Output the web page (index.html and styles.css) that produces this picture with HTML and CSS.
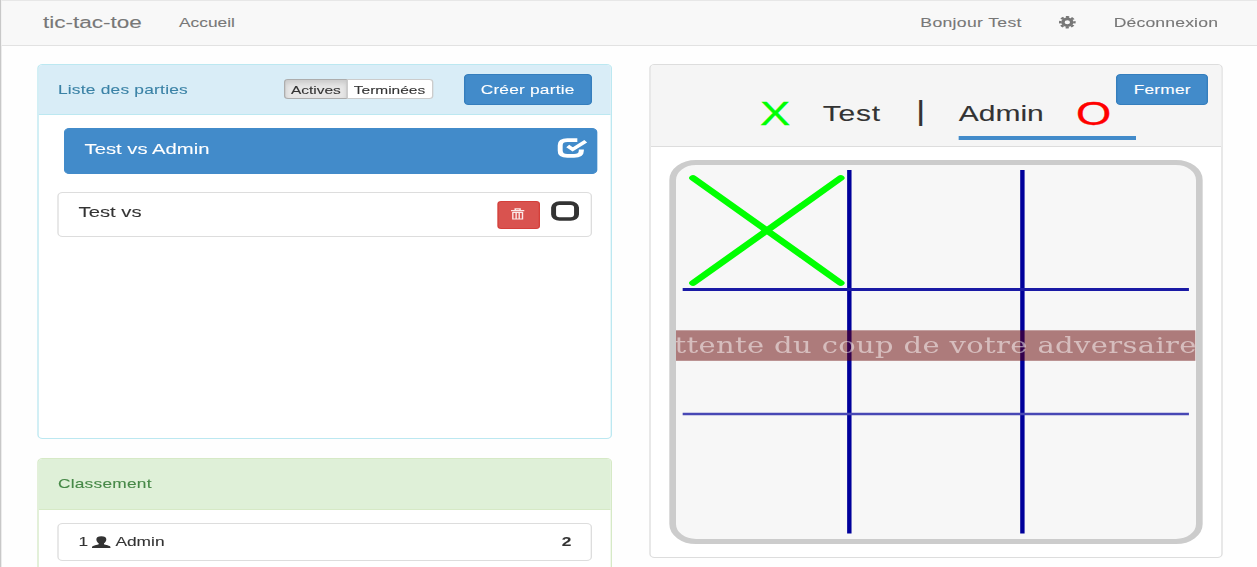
FILE: index.html
```html
<!DOCTYPE html>
<html lang="fr">
<head>
<meta charset="utf-8">
<title>tic-tac-toe</title>
<link rel="stylesheet" href="styles.css">
</head>
<body>
<div class="page">
  <nav class="navbar">
    <a class="brand">tic-tac-toe</a>
    <a class="nav-home">Accueil</a>
    <span class="nav-user">Bonjour Test</span>
    <svg class="nav-cog" viewBox="0 0 12 12"><circle cx="6" cy="6" r="3.2" fill="none" stroke="#777" stroke-width="2.5"/><circle cx="6" cy="6" r="5.1" fill="none" stroke="#777" stroke-width="1.800" stroke-dasharray="2.300 1.705" stroke-dashoffset="1.150"/></svg>
    <a class="nav-logout">Déconnexion</a>
  </nav>
  <main class="columns">
    <div class="left">
      <section class="panel games">
        <header class="panel-head info">
          <h2 class="title">Liste des parties</h2>
          <div class="toggle"><button class="seg active">Actives</button><button class="seg">Terminées</button></div>
          <button class="btn create">Créer partie</button>
        </header>
        <div class="game selected">
          <span class="game-name">Test vs Admin</span>
          <svg class="check" viewBox="0 0 23 20" fill="none" stroke="#fff" stroke-width="3.800"><path d="M15 2.100H7.500Q2.100 2.100 2.100 7.500V12.500Q2.100 17.900 7.500 17.900H12.500Q18 17.900 18 12.800V11.500"/><path d="M7.800 8L11.500 11.400L21.300 3.200" stroke-width="3.300"/></svg>
        </div>
        <div class="game">
          <span class="game-name">Test vs</span>
          <button class="trash"><svg viewBox="0 0 11 12" fill="none" stroke="#fbe9e8"><path d="M.3 2.500H10.700M3.600 2V.6H7.400V2" stroke-width="1.200"/><path d="M1.700 4V11.200H9.300V4M1.700 4.300H9.300M4.300 4V11M6.700 4V11" stroke-width="1.100"/></svg></button>
          <svg class="uncheck" viewBox="0 0 22 20"><rect x="2.200" y="2.200" width="17.200" height="15.800" rx="4.400" fill="none" stroke="#333" stroke-width="3.700"/></svg>
        </div>
      </section>
      <section class="panel ranking">
        <header class="panel-head success"><h2 class="title">Classement</h2></header>
        <div class="rank">
          <span>1</span>
          <svg class="user" viewBox="0 0 14 12"><path d="M7 0C9.700 0 10.900 1.400 10.700 3.400C10.600 5 9.800 6.200 9 7V8C9.700 8.900 13.800 9 14 11V12H0V11C.2 9 4.300 8.900 5 8V7C4.200 6.200 3.400 5 3.300 3.400C3.100 1.400 4.300 0 7 0Z" fill="#333"/></svg>
          <span class="player">Admin</span>
          <b class="score">2</b>
        </div>
      </section>
    </div>
    <section class="panel match">
      <header class="match-head">
        <span class="mark cross">X</span>
        <span class="name first">Test</span>
        <span class="bar">|</span>
        <span class="turn"><span class="name">Admin</span><span class="mark nought">O</span></span>
        <button class="btn close">Fermer</button>
      </header>
      <div class="board">
        <svg class="grid" viewBox="0 0 389.500 373">
          <g stroke="#00009b">
            <path d="M130 5V368.500M259.800 5V368.500" stroke-width="3.300"/>
            <path d="M5 124.500H384.700" stroke-width="2.900" stroke="#1a1aa5"/>
            <path d="M5 249H384.700" stroke-width="2.500" stroke="#4848b5"/>
          </g>
          <path d="M12.800 13L123.500 118M12.800 118L123.500 13" stroke="#0f0" stroke-width="5.800" stroke-linecap="round"/>
          <rect y="165.300" width="389.500" height="30.500" fill="#640000" fill-opacity=".5"/>
          <text class="status" x="-1.200" y="188" textLength="391.500" lengthAdjust="spacing">ttente du coup de votre adversaire</text>
        </svg>
      </div>
    </section>
  </main>
</div>
</body>
</html>
```
FILE: styles.css
```css
* { box-sizing: border-box; }
html, body { margin: 0; height: 567px; overflow: hidden; background: #fefefe; }
/* The interface is drawn with a wide horizontal aspect. */
.page {
  width: 942.75px;
  height: 567px;
  overflow: hidden;
  transform: scaleX(1.33333);
  transform-origin: 0 0;
  border-left: .75px solid #c8c8c8;
  font: 13px/18px "Liberation Sans", Arial, sans-serif;
  -webkit-text-stroke: .1px currentColor;
  color: #333;
}
button { font-family: inherit; padding: 0; -webkit-text-stroke: inherit; }
.navbar {
  display: flex;
  align-items: center;
  height: 46px;
  padding: 0 29px 1px 31.250px;
  background: #f8f8f8;
  border-top: 1px solid #e7e7e7;
  border-bottom: 1px solid #e2e2e2;
  color: #777;
}
.brand { width: 102px; font-size: 16.900px; }
.nav-home { flex: 1; }
.nav-user { width: 104px; font-size: 13.200px; letter-spacing: .25px; }
.nav-cog { width: 13px; height: 12.500px; margin-right: 28px; }
.nav-logout { width: 78.500px; font-size: 13.200px; letter-spacing: .12px; white-space: nowrap; }
.columns { display: flex; gap: 28.500px; padding: 18px 0 0 27.250px; }
.left { width: 430.500px; flex: none; }
.panel { border: 1px solid #ddd; border-radius: 4px; background: #fff; }
.games { height: 375px; border-color: #bce8f1; }
.panel-head { display: flex; align-items: center; padding: 0 14.200px; border-radius: 3px 3px 0 0; }
.info { height: 49.500px; background: #d9edf7; border-bottom: 1px solid #bce8f1; color: #3a82a6; }
.info .title { padding-top: 1px; }
.success { height: 51px; background: #dff0d8; border-bottom: 1px solid #d6e9c6; color: #468847; }
.title { margin: 0; font-size: 13px; font-weight: normal; letter-spacing: .17px; width: 170px; }
.toggle { display: flex; height: 20px; width: 112.500px; }
.seg {
  width: 65.500px;
  border: 1px solid #ccc;
  border-radius: 0 3px 3px 0;
  background: #fff;
  color: #333;
  font-size: 11.600px;
}
.seg:not(.active) { padding-right: 1px; }
.seg.active {
  width: 48px;
  margin-right: -1px;
  border-color: #adadad;
  border-radius: 3px 0 0 3px;
  background: #e6e6e6;
  box-shadow: inset 0 3px 5px rgba(0,0,0,.125);
}
.btn {
  height: 31px;
  border: 1px solid #357ebd;
  border-radius: 3.500px;
  background: #428bca;
  color: #fff;
  font-size: 13px;
  letter-spacing: .15px;
}
.create { width: 96px; margin-left: 22.500px; }
.game {
  display: flex;
  height: 45px;
  margin: 17.500px 14.200px 0;
  padding-left: 14.500px;
  border: 1px solid #ddd;
  border-radius: 4px;
  background: #fff;
}
.game.selected { height: 46px; margin: 13.500px 9.500px 0 18.700px; background: #428bca; border-color: #428bca; color: #fff; }
.game-name { flex: 1; margin-top: 10.500px; font-size: 15.200px; }
.check { width: 23px; height: 20px; margin: 8.500px 6.500px 0 0; }
.trash {
  width: 32px;
  height: 27.500px;
  margin: 8.500px 8px 0 0;
  border: 1px solid #d43f3a;
  border-radius: 3px;
  background: #d9534f;
}
.trash svg { display: block; width: 10.500px; height: 12px; margin: -1px auto 0; }
.uncheck { width: 22px; height: 20px; margin: 8px 8px 0 0; }
.ranking { height: 160px; margin-top: 18.500px; border-color: #d6e9c6; }
.rank {
  display: flex;
  align-items: center;
  height: 38px;
  margin: 13.500px 14.200px 0;
  padding: 0 14px 0 14.500px;
  border: 1px solid #ddd;
  border-radius: 4px;
  font-size: 13px;
}
.user { width: 14px; height: 12.500px; margin: 0 3.200px; }
.player { flex: 1; }
.match { width: 429.500px; height: 494px; }
.match-head {
  display: flex;
  height: 81.500px;
  background: #f5f5f5;
  border-bottom: 1px solid #ddd;
  border-radius: 3px 3px 0 0;
  line-height: 40px;
  padding: 27.500px 0 0 81.800px;
  position: relative;
}
.mark { font-size: 34px; -webkit-text-stroke-width: .35px; }
.cross { width: 47px; color: #0f0; }
.name { font-size: 22.500px; line-height: 41px; }
.first { width: 70px; letter-spacing: .6px; }
.bar { width: 32px; font-size: 27px; line-height: 36px; }
.turn { display: flex; width: 133px; height: 47.500px; border-bottom: 4.500px solid #428bca; }
.turn .name { width: 88px; }
.nought { color: #f00; }
.close { position: absolute; top: 8.500px; right: 9.800px; width: 68.500px; }
.board {
  width: 400px;
  height: 384px;
  margin: 13px 0 0 14.200px;
  border: 5.300px solid #ccc;
  border-radius: 20px;
  background: #f7f7f7;
}
.grid { display: block; width: 389.500px; height: 373px; }
.status { font: 21.700px "DejaVu Serif", serif; fill: #fff; fill-opacity: .5; -webkit-text-stroke: 0; }
```
